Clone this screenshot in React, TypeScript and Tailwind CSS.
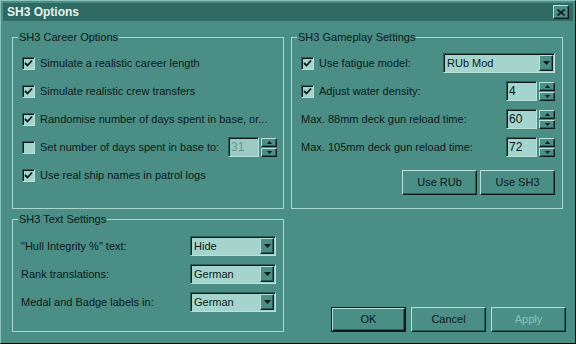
import React from "react";

const raised =
  "border border-t-[#b6e2da] border-l-[#b6e2da] border-r-[#0c1b19] border-b-[#0c1b19] shadow-[inset_-1px_-1px_0_#2c6058]";
const sunken =
  "border border-t-[#2c6058] border-l-[#2c6058] border-r-[#b6e2da] border-b-[#b6e2da] shadow-[inset_1px_1px_0_#0c1b19]";

const Check = ({ checked }: { checked: boolean }) => (
  <span className={`${sunken} w-[13px] h-[13px] shrink-0 bg-[#a4d4cc] flex items-center justify-center`}>
    {checked && (
      <svg width="9" height="9" viewBox="0 0 9 9">
        <polyline points="1,4 3.5,6.5 8,1.5" fill="none" stroke="#0c1b19" strokeWidth="1.8" />
      </svg>
    )}
  </span>
);

const Arrow = ({ up, small }: { up?: boolean; small?: boolean }) => (
  <svg width={small ? 5 : 7} height={small ? 3 : 4} viewBox={small ? "0 0 5 3" : "0 0 7 4"}>
    {small ? (
      <polygon points={up ? "2.5,0 5,3 0,3" : "0,0 5,0 2.5,3"} fill="#0c1b19" />
    ) : (
      <polygon points={up ? "3.5,0 7,4 0,4" : "0,0 7,0 3.5,4"} fill="#0c1b19" />
    )}
  </svg>
);

const Select = ({ value, w }: { value: string; w: string }) => (
  <div className={`${sunken} ${w} h-[20px] bg-[#a4d4cc] flex items-center justify-between pl-[3px] pr-[1px] py-[1px]`}>
    <span>{value}</span>
    <span className={`${raised} w-[14px] h-[16px] bg-[#4a8e86] flex items-center justify-center`}>
      <Arrow />
    </span>
  </div>
);

const Spin = ({ value, disabled }: { value: string; disabled?: boolean }) => (
  <div className="flex items-center gap-[2px] shrink-0">
    <div
      className={`${sunken} w-[31px] h-[20px] flex items-center pl-[2px] text-[12px] ${
        disabled ? "bg-[#9ccac2] text-[#5f9c94]" : "bg-[#a4d4cc]"
      }`}
    >
      {value}
    </div>
    <div className="flex flex-col gap-[1px]">
      <span className={`${raised} w-[16px] h-[9px] bg-[#4a8e86] flex items-center justify-center`}>
        <Arrow up small />
      </span>
      <span className={`${raised} w-[16px] h-[9px] bg-[#4a8e86] flex items-center justify-center`}>
        <Arrow small />
      </span>
    </div>
  </div>
);

const Button = ({ label, def, disabled }: { label: string; def?: boolean; disabled?: boolean }) => (
  <div className={`${def ? "border border-[#0c1b19]" : ""} w-[75px] h-[25px] flex`}>
    <div
      className={`${raised} flex-1 bg-[#4a8e86] flex items-center justify-center ${
        disabled ? "text-[#8cc2ba]" : ""
      }`}
    >
      {label}
    </div>
  </div>
);

const Group = ({ title, className, children }: { title: string; className: string; children: React.ReactNode }) => (
  <div className={`relative border border-[#a8d8d0] ${className}`}>
    <span className="absolute -top-[8px] left-[5px] px-[1px] bg-[#4a8e86] leading-[14px]">{title}</span>
    {children}
  </div>
);

export default function App() {
  return (
    <div className="w-[576px] h-[344px] bg-[#4a8e86] border border-t-[#88c2ba] border-l-[#88c2ba] border-r-black border-b-black font-['Liberation_Sans',Arial,sans-serif] text-[11px] text-[#0c1a18] whitespace-nowrap flex flex-col">
      <div className="mx-[2px] mt-[2px] h-[18px] bg-[#2f6a63] flex items-center justify-between pl-[4px] pr-[4px]">
        <span className="font-bold text-[12px] text-[#e4f4f0]">SH3 Options</span>
        <span className={`${raised} w-[16px] h-[14px] bg-[#4a8e86] flex items-center justify-center`}>
          <svg width="8" height="7" viewBox="0 0 8 7">
            <path d="M0.5 0.5 L7.5 6.5 M7.5 0.5 L0.5 6.5" stroke="#0c1b19" strokeWidth="1.6" />
          </svg>
        </span>
      </div>

      <div className="flex gap-[7px] pl-[11px] pt-[16px]">
        <div className="w-[272px] flex flex-col">
          <Group title="SH3 Career Options" className="h-[172px] pt-[11px] pl-[9px] pr-[6px]">
            {[
              ["Simulate a realistic career length", true],
              ["Simulate realistic crew transfers", true],
              ["Randomise number of days spent in base, or...", true],
            ].map(([t, c]) => (
              <div key={t as string} className="h-[28px] flex items-center gap-[5px]">
                <Check checked={c as boolean} />
                <span>{t as string}</span>
              </div>
            ))}
            <div className="h-[28px] flex items-center justify-between">
              <div className="flex items-center gap-[5px]">
                <Check checked={false} />
                <span>Set number of days spent in base to:</span>
              </div>
              <Spin value="31" disabled />
            </div>
            <div className="h-[28px] flex items-center gap-[5px]">
              <Check checked />
              <span>Use real ship names in patrol logs</span>
            </div>
          </Group>

          <Group title="SH3 Text Settings" className="mt-[10px] h-[113px] pt-[12px] pl-[8px] pr-[7px]">
            {[
              ["\"Hull Integrity %\" text:", "Hide"],
              ["Rank translations:", "German"],
              ["Medal and Badge labels in:", "German"],
            ].map(([t, v]) => (
              <div key={t} className="h-[28px] flex items-center justify-between">
                <span>{t}</span>
                <Select value={v} w="w-[86px]" />
              </div>
            ))}
          </Group>
        </div>

        <div className="w-[272px] flex flex-col">
          <Group title="SH3 Gameplay Settings" className="h-[172px] pt-[11px] pl-[9px] pr-[7px]">
            <div className="h-[28px] flex items-center justify-between">
              <div className="flex items-center gap-[5px]">
                <Check checked />
                <span>Use fatigue model:</span>
              </div>
              <Select value="RUb Mod" w="w-[112px]" />
            </div>
            <div className="h-[28px] flex items-center justify-between">
              <div className="flex items-center gap-[5px]">
                <Check checked />
                <span>Adjust water density:</span>
              </div>
              <Spin value="4" />
            </div>
            <div className="h-[28px] flex items-center justify-between">
              <span>Max. 88mm deck gun reload time:</span>
              <Spin value="60" />
            </div>
            <div className="h-[28px] flex items-center justify-between">
              <span>Max. 105mm deck gun reload time:</span>
              <Spin value="72" />
            </div>
            <div className="flex justify-end gap-[3px] mt-[9px]">
              <Button label="Use RUb" />
              <Button label="Use SH3" />
            </div>
          </Group>

          <div className="flex justify-end gap-[5px] mt-[98px] -mr-[3px]">
            <Button label="OK" def />
            <Button label="Cancel" />
            <Button label="Apply" disabled />
          </div>
        </div>
      </div>
    </div>
  );
}
